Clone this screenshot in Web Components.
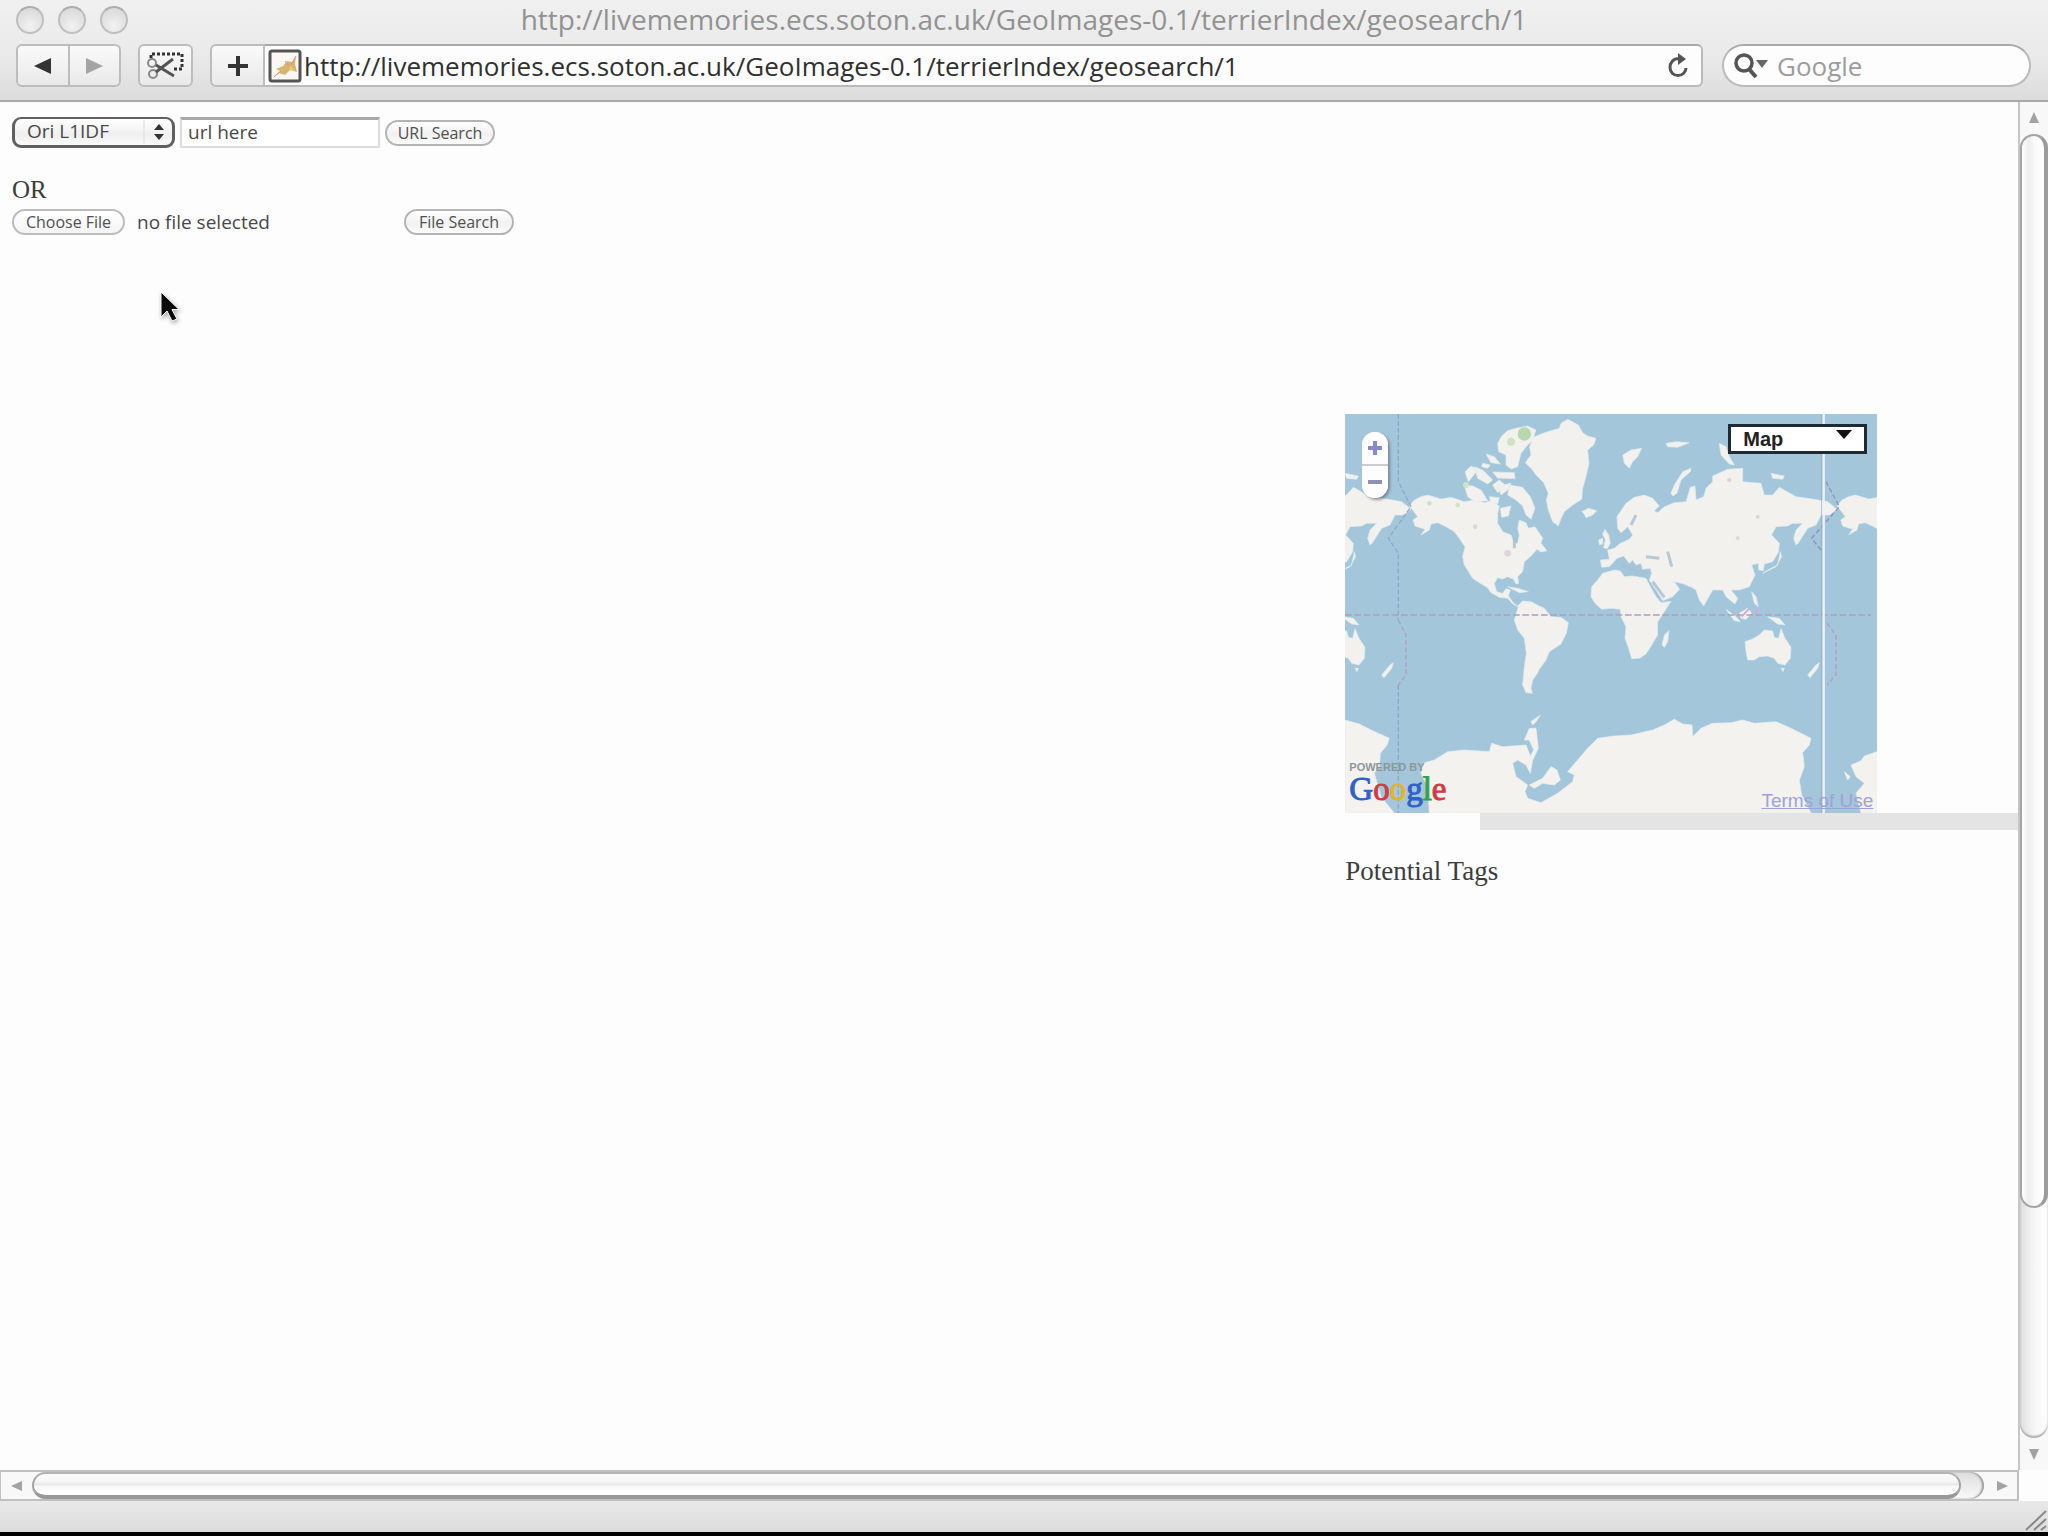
<!DOCTYPE html>
<html lang="en">
<head>
<meta charset="utf-8">
<title>http://livememories.ecs.soton.ac.uk/GeoImages-0.1/terrierIndex/geosearch/1</title>
<style>
  html, body { margin: 0; height: 100%; background: #000; }
  body { font-family: "Open Sans", "Noto Sans", sans-serif; overflow: hidden; }
</style>
</head>
<body>
<browser-window>
  <title-bar slot="title">http://livememories.ecs.soton.ac.uk/GeoImages-0.1/terrierIndex/geosearch/1</title-bar>
  <tool-bar slot="tools" url="http://livememories.ecs.soton.ac.uk/GeoImages-0.1/terrierIndex/geosearch/1"></tool-bar>
  <geo-page slot="page">
    <search-form slot="form"></search-form>
    <world-map slot="map"></world-map>
    <span slot="tags">Potential Tags</span>
  </geo-page>
</browser-window>

<script>
const define = (name, html, setup) => customElements.define(name, class extends HTMLElement {
  constructor() {
    super();
    this.attachShadow({ mode: "open" }).innerHTML =
      "<style>:host,*{box-sizing:border-box}button,input,select{font:inherit;color:inherit;margin:0}</style>" + html;
  }
  connectedCallback() { if (setup) setup(this, this.shadowRoot); }
});

define("title-bar", `
<style>
  :host { display: grid; grid-template-columns: 1fr auto 1fr; height: 40px; align-items: center; color: #929292; font-size: 28px; line-height: 36px; }
  .lights { display: flex; gap: 14px; padding-left: 16px; }
  i { width: 28px; height: 28px; border-radius: 50%; border: 2px solid #bfbfbf; border-top-color: #adadad;
      background: radial-gradient(circle at 50% 75%, #f2f2f2, #dcdcdc 75%); }
  span { padding-bottom: 3px; }
</style>
<div class="lights"><i></i><i></i><i></i></div><span><slot></slot></span>`);

define("tool-bar", `
<style>
  :host { display: flex; height: 60px; padding: 4px 17px 0 16px; align-items: flex-start; color: #303030; font-size: 26px; }
  button { display: grid; place-items: center; height: 43px; padding: 0; border: 2px solid #bdbdbd; border-radius: 6px;
    background: linear-gradient(#fafafa, #e9e9e9); }
  .nav { display: flex; margin-right: 17px; }
  .nav button:first-child { width: 54px; border-radius: 6px 0 0 6px; }
  .nav button:last-child { width: 51px; border-left: 0; border-radius: 0 6px 6px 0; }
  .clip { width: 55px; margin-right: 17px; }
  .add { width: 55px; border-radius: 6px 0 0 6px; }
  .field { display: flex; align-items: center; flex: 1; height: 43px; border: 2px solid #bababa; border-left: 0; border-top-color: #a9a9a9;
    border-radius: 0 6px 6px 0; background: #fdfdfd; padding: 0 9px 0 3px; margin-right: 19px; }
  .field input { flex: 1; min-width: 0; height: 39px; border: 0; outline: 0; background: none; padding: 0 0 0 2px; }
  .reload { border: 0; background: none; height: 36px; width: 28px; }
  .search { display: flex; align-items: center; width: 309px; height: 43px; border: 2px solid #bababa; border-top-color: #a9a9a9;
    border-radius: 22px; background: #fdfdfd; padding: 0 20px 0 9px; }
  .search input { flex: 1; min-width: 0; height: 39px; border: 0; outline: 0; background: none; padding: 0 0 0 8px; }
  .search input::placeholder { color: #9c9c9c; opacity: 1; }
  svg { display: block; }
</style>
<div class="nav">
  <button aria-label="Back"><svg width="20" height="18"><path d="M1 9 18 1V17Z" fill="#333"/></svg></button>
  <button aria-label="Forward"><svg width="20" height="18"><path d="M18 9 1 1V17Z" fill="#a4a4a4"/></svg></button>
</div>
<button class="clip" aria-label="Web clip"><svg width="40" height="30" viewBox="0 0 40 30" fill="none">
  <path d="M5 7V3H36V18H27" stroke="#333" stroke-width="3" stroke-dasharray="3 2"/>
  <g stroke="#888" stroke-width="2"><circle cx="6" cy="12" r="4"/><circle cx="7" cy="23" r="4"/></g>
  <path d="M10 14 28 25M10 21 27 8" stroke="#555" stroke-width="3"/></svg></button>
<button class="add" aria-label="Add bookmark"><svg width="22" height="22"><path d="M11 1V21M1 11H21" stroke="#333" stroke-width="4"/></svg></button>
<div class="field">
  <svg width="34" height="34" viewBox="0 0 34 34"><rect x="2" y="2" width="30" height="30" rx="2" fill="#fbf8f4" stroke="#555" stroke-width="3"/>
    <path d="M5 28 12 22 8 20 15 17 19 12 24 13 28 7 27 15 29 23 22 21 17 26 11 24Z" fill="#d9b574"/>
    <path d="M6 28 13 22M17 12 22 18 28 7" stroke="#d9909a" stroke-width="1" fill="none"/><path d="M22 16l5 6-6-2z" fill="#e9d064"/></svg>
  <input aria-label="Address" type="text">
  <button class="reload" aria-label="Reload"><svg width="24" height="26" viewBox="0 0 24 26"><path d="M13 5.500C7 5.500 4 10 4 14.500C4 19 7.500 22.500 12 22.500C16.500 22.500 20 19 20 15" fill="none" stroke="#555" stroke-width="3"/><path d="M12 0 20 6 12 12Z" fill="#555"/></svg></button>
</div>
<div class="search">
  <svg width="36" height="28" viewBox="0 0 36 28"><circle cx="11" cy="11" r="8" fill="none" stroke="#555" stroke-width="3.500"/><path d="M16 17 23 25" stroke="#555" stroke-width="4"/><path d="M23 8H35L29 16Z" fill="#666"/></svg>
  <input aria-label="Google search" type="text" placeholder="Google">
</div>`, (el, root) => { root.querySelector(".field input").value = el.getAttribute("url"); });

define("pill-button", `
<style>
  :host { display: block; }
  button { display: block; width: 100%; height: 26px; border: 2px solid #b4b4b4; border-radius: 13px; padding: 0; text-align: center;
    font-size: 16px; line-height: 20px; color: #505050; background: linear-gradient(#fff, #f1f1f1 55%, #fbfbfb); }
</style>
<button type="button"><slot></slot></button>`);

define("search-form", `
<style>
  :host { display: block; padding: 15px 12px; color: #484848; font-size: 19px; }
  .row { display: flex; align-items: center; }
  .pick { position: relative; width: 163px; height: 31px; margin-right: 5px; }
  select { appearance: none; width: 100%; height: 100%; padding: 0 0 3px 12px; border: 3px solid #606060; border-top-width: 2px; border-radius: 9px;
    line-height: 24px; background: linear-gradient(#fff, #efefef 60%, #fafafa); }
  .pick svg { position: absolute; right: 4px; top: 3px; pointer-events: none; }
  .url { width: 200px; height: 31px; border: 2px solid #dcdcdc; border-top: 3px solid #a8a8a8; background: #fff; padding: 0 6px 3px; margin-right: 5px; outline: 0; }
  .or { margin: 24px 0 0; font: 25px/36px "Liberation Serif", serif; color: #3c3c3c; }
  .row.file { height: 28px; }
  .chooser { display: flex; align-items: center; width: 392px; line-height: 26px; }
  .chooser label { width: 113px; height: 26px; border: 2px solid #bcbcbc; border-radius: 13px; font-size: 16px; line-height: 22px; text-align: center;
    background: linear-gradient(#fff, #f4f4f4); margin-right: 12px; color: #505050; }
  .chooser input { display: none; }
  pill-button { width: 110px; }
</style>
<div class="row">
  <div class="pick"><select aria-label="Index"><option>Ori L1IDF</option></select>
    <svg width="28" height="24"><path d="M1 0V24" stroke="#ddd" stroke-width="1"/><path d="M11 10 16 4 21 10ZM11 14 16 20 21 14Z" fill="#333"/></svg></div>
  <input class="url" aria-label="Image URL" type="text" value="url here">
  <pill-button>URL Search</pill-button>
</div>
<p class="or">OR</p>
<div class="row file">
  <div class="chooser"><label for="f">Choose File</label><input id="f" type="file"><span>no file selected</span></div>
  <pill-button>File Search</pill-button>
</div>`);

define("world-map", `
<style>
  :host { display: block; position: relative; width: 532px; height: 399px; overflow: hidden; font-family: "Liberation Sans", sans-serif; }
  .world { display: block; width: 100%; height: 100%; }
  .zoom { position: absolute; left: 17px; top: 18px; width: 26px; height: 66px; border-radius: 13px; background: #fff; box-shadow: 2px 2px 3px #667a; overflow: hidden; }
  .zoom button { display: grid; place-items: center; width: 26px; height: 32px; border: 0; padding: 0; background: #fdfdff; }
  .zoom button + button { border-top: 2px solid #ccc; height: 34px; }
  .type { position: absolute; right: 10px; top: 10px; width: 139px; height: 30px; }
  .type select { appearance: none; width: 100%; height: 100%; border: 3px solid #1c2b36; border-radius: 0; background: #fff; padding: 0 0 0 12px; font-weight: bold; font-size: 20px; line-height: 24px; color: #222; }
  .type svg { position: absolute; right: 15px; top: 6px; pointer-events: none; }
  .brand { position: absolute; left: 4px; bottom: 8px; }
  .brand small { display: block; font-size: 11px; line-height: 12px; color: #8c969c; font-weight: bold; }
  .brand b { display: block; font: 33px/32px "Liberation Serif", serif; -webkit-text-stroke: 1px currentColor; color: #2f62c8; }
  .r { color: #d23b45; } .y { color: #e2b52c; } .g { color: #35a24a; }
  a { position: absolute; right: 4px; bottom: 1px; font-size: 19px; line-height: 22px; color: #9ea2d4; }
</style>
<svg class="world" viewBox="42 42 1596 1197" preserveAspectRatio="none" aria-hidden="true">
  <rect x="42" y="42" width="1596" height="1197" fill="#a3c6db"/>
  <defs><g id="land" stroke-linejoin="round">
    <path d="M245 330 235 318 250 300 270 290 290 285 330 297 360 292 400 305 430 300 460 308 480 302 505 318 500 340 500 370 515 395 540 405 550 430 560 430 565 405 560 385 565 360 585 368 592 385 612 380 635 415 630 430 648 452 630 456 618 448 600 468 580 485 575 515 560 530 563 550 555 552 548 538 530 530 515 537 500 533 490 550 497 575 515 580 525 566 538 570 532 588 548 610 560 618 575 603 600 605 625 618 640 625 660 650 690 652 712 668 706 700 690 732 655 755 645 780 625 808 618 822 605 840 600 865 604 880 585 878 575 855 580 800 586 760 580 715 560 690 550 660 562 620 545 612 530 595 505 592 480 578 468 562 445 548 425 535 400 495 395 470 402 440 385 415 370 395 345 380 320 368 300 372 295 390 270 405 282 388 252 378 246 360 260 350Z"/>
    <path d="M583 188 600 165 596 140 606 112 640 98 685 85 690 70 710 58 742 75 755 98 770 108 795 115 788 135 770 150 774 190 765 230 755 265 752 298 725 315 700 335 690 355 682 378 665 365 652 330 646 300 652 280 638 248 615 225 603 208Z"/>
    <path d="M500 130 512 108 530 92 555 85 590 78 615 90 605 120 590 135 570 160 560 200 540 207 525 195 525 165 503 155Z"/>
    <path d="M535 255 575 262 598 290 612 325 600 358 585 345 575 318 555 300 530 285ZM400 255 425 258 450 270 470 302 432 305 410 290ZM430 200 455 210 485 240 470 252 440 235ZM475 290 505 293 500 312 480 308ZM508 325 540 318 532 348 512 352ZM465 162 490 170 508 192 480 188ZM402 215 420 198 440 210 412 245ZM485 216 550 218 552 236 500 234ZM485 255 505 240 522 255 500 278ZM752 335 772 325 797 332 785 345 765 353 760 342ZM500 258 540 250 530 270 510 285ZM455 190 478 195 470 205 452 200Z"/>
    <path d="M822 388 833 405 838 430 828 447 818 443 823 420 815 402ZM803 420 815 415 815 432 805 434ZM530 560 560 565 592 575 565 578Z"/>
    <path d="M860 385 858 350 885 310 910 292 940 285 965 295 985 318 970 332 980 338 1000 320 1030 308 1065 305 1078 262 1092 258 1095 300 1118 290 1125 265 1145 245 1145 228 1190 208 1235 205 1235 245 1290 250 1300 285 1325 285 1345 262 1395 290 1450 298 1490 305 1518 328 1495 345 1470 345 1455 375 1430 385 1400 432 1388 415 1395 390 1415 370 1385 370 1370 378 1335 380 1322 405 1345 430 1343 455 1325 485 1300 492 1297 512 1283 510 1282 490 1262 495 1272 525 1255 560 1225 570 1200 570 1220 595 1212 612 1185 590 1175 570 1145 570 1118 618 1105 600 1095 570 1082 562 1058 552 1030 545 1046 568 1025 590 995 602 985 585 955 540 962 520 958 505 935 508 930 490 915 495 905 480 895 490 878 468 858 475 835 500 812 502 808 480 835 478 830 450 850 445 868 430 895 418 905 405 890 380 880 390 870 398Z"/>
    <path d="M780 590 782 560 800 540 815 520 850 510 868 513 880 530 905 528 945 535 958 560 975 590 990 608 1020 604 1000 635 980 665 980 705 962 735 945 762 925 775 902 776 893 745 882 715 885 680 870 650 868 628 840 625 812 628 792 610ZM993 735 1000 705 1014 692 1010 725 1000 742Z"/>
    <path d="M1242 725 1262 718 1285 705 1300 690 1325 693 1330 712 1343 715 1350 686 1362 715 1380 742 1378 775 1362 795 1340 790 1330 775 1310 768 1285 770 1270 780 1250 780 1245 755ZM1350 805 1360 805 1356 815ZM1430 825 1455 795 1465 788 1460 805 1437 833ZM1310 650 1345 655 1362 675 1340 672ZM1185 628 1215 650 1228 665 1210 662ZM1225 640 1250 625 1262 640 1245 658 1230 655ZM1262 575 1275 590 1282 620 1270 610ZM1295 520 1335 500 1352 470 1348 455 1340 495 1310 510ZM1388 415 1405 400 1412 412 1395 435ZM1020 280 1030 255 1055 215 1080 205 1078 215 1050 240 1038 280 1025 288ZM875 165 900 150 932 145 920 170 905 185 895 205 880 190ZM1005 130 1035 125 1075 128 1040 142 1010 140ZM1165 130 1185 140 1195 170 1210 195 1195 192 1170 165ZM1320 220 1360 228 1355 238 1325 235Z"/>
  </g></defs>
  <g fill="#f3f1ed" stroke="#dcebee" stroke-width="2"><use href="#land"/><use href="#land" x="-1278"/><use href="#land" x="1283"/></g>
  <g fill="#f4f2ee" stroke="#e6eef0" stroke-width="2">
    <path d="M42 960 85 972 120 990 175 1015 168 1035 148 1060 145 1100 130 1120 150 1190 190 1239H42Z"/>
    <path d="M295 1239 290 1160 270 1120 275 1090 310 1080 350 1055 400 1050 475 1055 482 1030 515 1040 585 1035 598 1068 608 1050 595 1020 580 1020 595 985 615 985 622 1045 605 1080 598 1120 585 1095 560 1080 545 1090 555 1130 590 1155 582 1175 590 1195 630 1208 680 1180 725 1145 730 1125 710 1115 740 1080 770 1045 800 1015 850 1008 900 1005 965 990 1000 975 1030 958 1055 972 1083 975 1085 1010 1110 985 1145 970 1200 968 1235 960 1270 970 1335 965 1380 985 1440 1015 1435 1035 1415 1058 1420 1100 1405 1140 1412 1185 1440 1239Z"/>
    <path d="M595 1155 635 1135 660 1100 678 1110 688 1140 670 1155 635 1150 610 1165ZM1638 1055 1600 1068 1590 1082 1560 1095 1575 1130 1600 1150 1575 1180 1590 1239H1638ZM1540 1115 1558 1130 1550 1140ZM600 965 628 945 615 965 605 975Z"/>
  </g>
  <g fill="none" stroke="#a9bfd0" stroke-width="9" opacity=".8"><path d="M900 375 915 345M945 470 985 475M1010 455 1022 500M875 498 945 520M965 545 1000 592M550 415V445"/></g>
  <g fill="#cfe3c4"><ellipse cx="580" cy="102" rx="20" ry="20" fill="#b5d8ad"/><circle cx="540" cy="125" r="12"/><circle cx="405" cy="255" r="9"/><circle cx="295" cy="310" r="7"/><circle cx="380" cy="315" r="7"/></g>
  <g fill="#ddd5dd"><circle cx="530" cy="460" r="10"/><circle cx="433" cy="380" r="7"/><circle cx="1195" cy="240" r="7"/><circle cx="1280" cy="350" r="6"/><circle cx="1220" cy="415" r="6"/></g>
  <g fill="none" stroke="#b49cbd" stroke-width="4">
    <path d="M42 645H1620" stroke-dasharray="20 8"/>
    <path d="M202 42V245L240 320 172 415 202 460V660M202 855V1239" stroke="#8ea9c3" stroke-dasharray="14 7"/>
    <path d="M202 660 225 705V825L202 855M1488 670 1515 705V825L1488 855" stroke-dasharray="14 8"/>
    <path d="M1485 245 1525 320 1442 415 1474 455" stroke="#8c93b5" stroke-dasharray="14 8"/>
  </g>
  <path d="M1472 42V1239" stroke="#8aa8c2" stroke-width="2"/><path d="M1478 42V1239" stroke="#f2f0fa" stroke-width="7"/>
  <path d="M1232 650 1255 625M1270 650 1280 625" stroke="#d7a5d5" stroke-width="5"/>
</svg>
<div class="zoom">
  <button aria-label="Zoom in"><svg width="14" height="14"><path d="M7 0V14M0 7H14" stroke="#8389ca" stroke-width="4"/></svg></button>
  <button aria-label="Zoom out"><svg width="14" height="4"><path d="M0 2H14" stroke="#8b92b5" stroke-width="4"/></svg></button>
</div>
<div class="type"><select aria-label="Map type"><option>Map</option></select><svg width="16" height="10"><path d="M0 0H16L8 9Z" fill="#111"/></svg></div>
<div class="brand"><small>POWERED BY</small><b>G<span class="r">o</span><span class="y">o</span>g<span class="g">l</span><span class="r">e</span></b></div>
<a href="#terms">Terms of Use</a>`);

define("geo-page", `
<style>
  :host { display: grid; grid-template-columns: 2fr 1fr; flex: 1; min-width: 0; background: #fdfdfe; position: relative; }
  aside { padding-top: 312px; min-width: 0; }
  .bar { height: 17px; margin-left: 20%; background: #e4e4e4; }
  .tags { font: 27px/36px "Liberation Serif", serif; color: #3c3c3c; margin: 23px 0 0; }
  .cursor { position: absolute; left: 160px; top: 189px; filter: drop-shadow(1px 2px 2px #0005); }
</style>
<main><slot name="form"></slot></main>
<aside><slot name="map"></slot><div class="bar"></div><p class="tags"><slot name="tags"></slot></p></aside>
<svg class="cursor" width="20" height="32"><path d="M1 1V26L7 20 12 30 17 28 12 18.500H19Z" fill="#0a0a0a" stroke="#fff" stroke-width="1"/></svg>`);

define("scroll-bar", `
<style>
  :host { display: flex; flex: none; background: #f8f8f8; }
  :host([dir-y]) { flex-direction: column; width: 30px; border-left: 2px solid #c6c6c6; }
  :host(:not([dir-y])) { height: 31px; margin-right: 29px; border: 2px solid #c0c0c0; border-left-width: 1px; }
  .end { display: grid; place-items: center; flex: none; }
  .groove { display: flex; flex: 1; }
  .thumb { border: 2px solid #a4a4a4; border-radius: 14px; }
  :host([dir-y]) .end { height: 32px; }
  :host([dir-y]) .groove { flex-direction: column; border-radius: 14px; background: linear-gradient(90deg, #dedede, #f6f6f6 50%, #fff); box-shadow: inset 0 -2px 2px #aaa; }
  :host([dir-y]) .thumb { flex: 0 0 82.400%; background: linear-gradient(90deg, #fff, #eee 30%, #fafafa 60%, #fff); border-right: 4px solid #9c9c9c; }
  :host(:not([dir-y])) .end { width: 31px; }
  :host(:not([dir-y])) .groove { border-radius: 14px; background: linear-gradient(#ddd, #fafafa); box-shadow: inset -2px 0 2px #999; margin-right: 2px; }
  :host(:not([dir-y])) .thumb { flex: 0 0 98.800%; background: linear-gradient(#fafafa, #f6f6f6 35%, #e9e9e9 50%, #f9f9f9 60%, #fff); border-top: 2px solid #b4b4b4; border-bottom: 4px solid #999; }
  :host([dir-y]) .a { rotate: 90deg; }
  .b { rotate: 180deg; }
  :host([dir-y]) .b { rotate: 270deg; }
</style>
<div class="end"><svg class="a" width="12" height="12"><path d="M0 6 11 1V11Z" fill="#a2a2a2"/></svg></div>
<div class="groove"><div class="thumb"></div></div>
<div class="end"><svg class="b" width="12" height="12"><path d="M0 6 11 1V11Z" fill="#a2a2a2"/></svg></div>`);

define("browser-window", `
<style>
  :host { display: flex; flex-direction: column; height: 100vh; background: #fdfdfe; }
  header { border-bottom: 2px solid #a9a9a9; background: linear-gradient(#f0f0f0, #eaeaea 55%, #dcdcdc); }
  .view { display: flex; flex: 1; min-height: 0; }
  footer { display: flex; justify-content: flex-end; align-items: flex-end; height: 35px; border-bottom: 4px solid #000; background: linear-gradient(#e9e9e9, #dcdcdc); }
</style>
<header><slot name="title"></slot><slot name="tools"></slot></header>
<div class="view"><slot name="page"></slot><scroll-bar dir-y></scroll-bar></div>
<scroll-bar></scroll-bar>
<footer><svg width="24" height="24"><path d="M2 22 22 3M10 22 22 11M17 22 22 18" stroke="#888" stroke-width="2"/></svg></footer>`);
</script>
</body>
</html>
